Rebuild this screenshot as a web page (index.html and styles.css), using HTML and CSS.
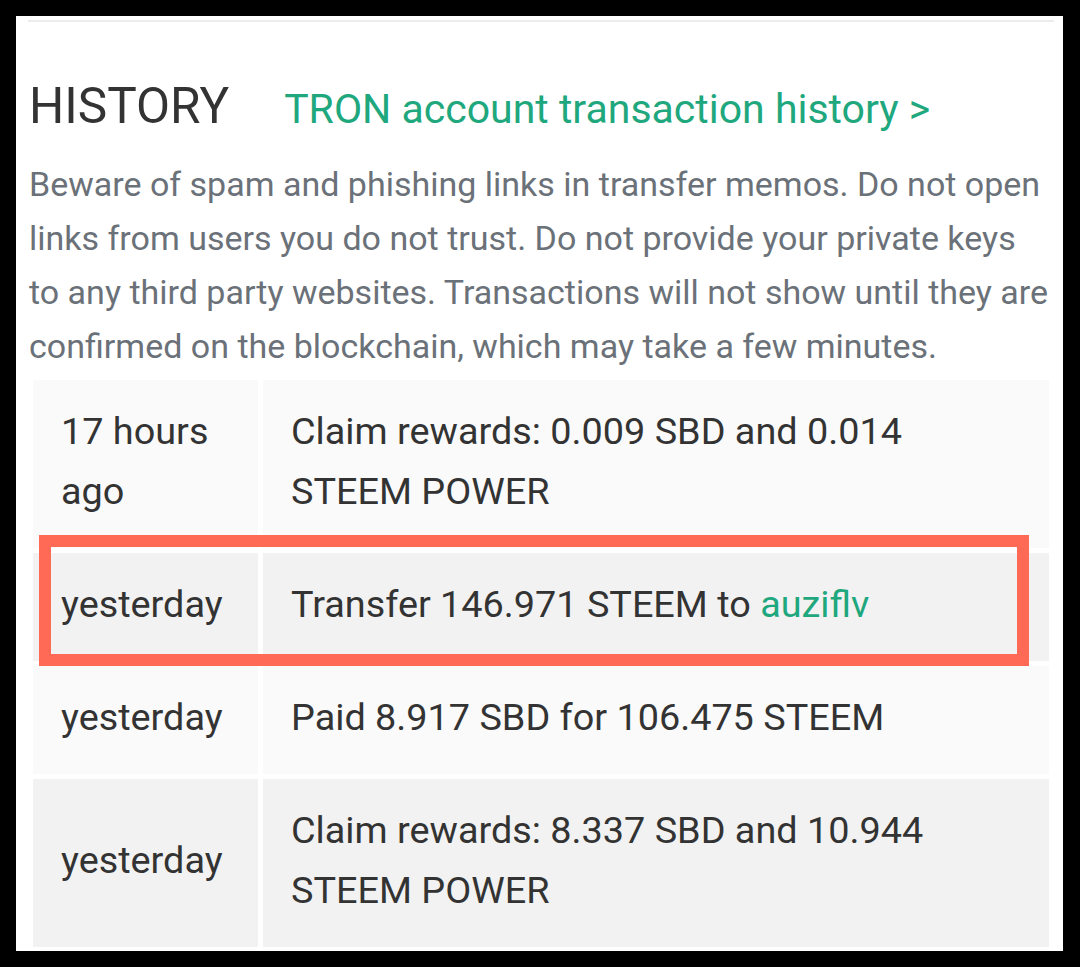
FILE: index.html
```html
<!DOCTYPE html>
<html lang="en">
<head>
<meta charset="utf-8">
<title>History</title>
<link rel="stylesheet" href="styles.css">
</head>
<body>
<div class="panel">
  <div class="rule"></div>
  <div class="heading">
    <h2 class="title">HISTORY</h2>
    <a class="tron-link" href="#">TRON account transaction history &gt;</a>
  </div>
  <p class="desc">Beware of spam and phishing links in transfer memos. Do not open links from users you do not trust. Do not provide your private keys to any third party websites. Transactions will not show until they are confirmed on the blockchain, which may take a few minutes.</p>
  <div class="table-wrap">
    <table class="history">
      <colgroup><col class="col-time"><col class="col-op"></colgroup>
      <tbody>
        <tr class="odd"><td>17 hours ago</td><td>Claim rewards: 0.009 SBD and 0.014 STEEM POWER</td></tr>
        <tr class="even"><td>yesterday</td><td>Transfer 146.971 STEEM to <a class="user" href="#">auziflv</a></td></tr>
        <tr class="odd"><td>yesterday</td><td>Paid 8.917 SBD for 106.475 STEEM</td></tr>
        <tr class="even"><td>yesterday</td><td>Claim rewards: 8.337 SBD and 10.944 STEEM POWER</td></tr>
      </tbody>
    </table>
    <div class="highlight"></div>
  </div>
</div>
</body>
</html>
```
FILE: styles.css
```css
html, body {
  margin: 0;
  padding: 0;
  background: #000;
}
body {
  width: 1080px;
  height: 967px;
  overflow: hidden;
  font-family: Roboto, "Liberation Sans", sans-serif;
}
.panel {
  margin: 16px 17px 0 16px;
  height: 935px;
  background: #fff;
  padding: 4px 9px 0 12px;
  box-sizing: border-box;
  overflow: hidden;
}
.rule {
  height: 2px;
  background: #ececec;
}
.heading {
  display: flex;
  align-items: baseline;
  margin-top: 55px;
  line-height: 58px;
}
.title {
  margin: 0;
  font-size: 49.5px;
  font-weight: 400;
  color: #333;
  padding-left: 1px;
}
.tron-link {
  margin-left: 55px;
  font-size: 41px;
  color: #1fa77d;
  text-decoration: none;
}
.desc {
  margin: 19px 0 0 0;
  width: 1022px;
  font-size: 34px;
  line-height: 54px;
  color: #6b7178;
  padding-left: 1px;
}
.table-wrap {
  position: relative;
  margin-top: 2px;
}
.history {
  width: 100%;
  border-collapse: separate;
  border-spacing: 5px;
  table-layout: fixed;
  font-size: 37.8px;
  line-height: 60px;
  color: #333;
}
.col-time { width: 225px; }
.history td {
  padding: 21px 28px 27px 28px;
  vertical-align: middle;
}
.odd td { background: #fafafa; }
.even td { background: #f2f2f2; }
.user {
  color: #1fa77d;
  text-decoration: none;
}
.highlight {
  position: absolute;
  left: 11px;
  top: 160px;
  width: 990px;
  height: 131px;
  box-sizing: border-box;
  border: 12px solid #fe6a55;
}
```
